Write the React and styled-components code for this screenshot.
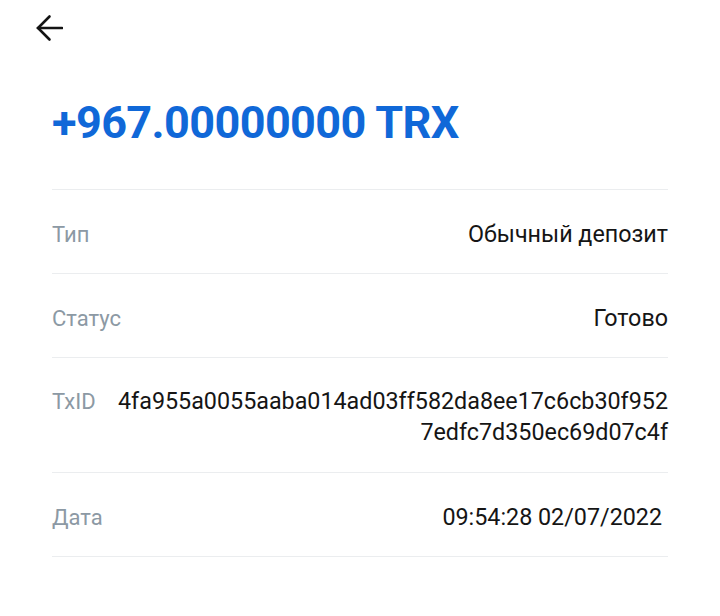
import React from "react";
import styled, { createGlobalStyle } from "styled-components";

const GlobalStyle = createGlobalStyle`
  html, body {
    margin: 0;
    padding: 0;
    background: #ffffff;
  }
  body {
    font-family: Roboto, "Noto Sans", sans-serif;
  }
`;

const Page = styled.div`
  width: 720px;
  height: 616px;
  box-sizing: border-box;
  padding: 0 52px;
  background: #ffffff;
  overflow: hidden;
`;

const TopBar = styled.div`
  height: 56px;
  display: flex;
  align-items: center;
  margin-left: -17px;
`;

const BackButton = styled.button`
  border: 0;
  background: none;
  padding: 0;
  display: flex;
  cursor: pointer;
  color: #141414;
`;

const Amount = styled.div`
  margin-top: 39px;
  height: 94px;
  font-size: 45px;
  font-weight: 700;
  color: #1068d8;
  letter-spacing: -0.6px;
  line-height: 56px;
`;

const List = styled.div`
  border-bottom: 1px solid #ebedef;
`;

const Row = styled.div`
  display: flex;
  justify-content: space-between;
  align-items: ${p => (p.top ? "flex-start" : "center")};
  gap: 20px;
  border-top: 1px solid #ebedef;
  min-height: 84px;
  padding: ${p => (p.top ? "28px 0 24px" : "5px 0 0")};
  box-sizing: border-box;
`;

const Label = styled.div`
  font-size: 22px;
  color: #8c99a4;
  white-space: nowrap;
  line-height: 31px;
`;

const Value = styled.div`
  font-size: 23.3px;
  color: #151515;
  text-align: right;
  line-height: 31px;
  padding-right: ${p => p.inset || 0}px;
`;

const Arrow = () => (
  <svg width="28" height="28" viewBox="0 0 28 28" fill="none" stroke="currentColor" strokeWidth="2.6" strokeLinecap="round" strokeLinejoin="miter">
    <path d="M27 14H3" />
    <path d="M14.5 2.5L3 14l11.5 11.5" />
  </svg>
);

export default function App() {
  return (
    <>
      <GlobalStyle />
      <Page>
        <TopBar>
          <BackButton aria-label="Назад">
            <Arrow />
          </BackButton>
        </TopBar>
        <Amount>+967.00000000 TRX</Amount>
        <List>
          <Row>
            <Label>Тип</Label>
            <Value>Обычный депозит</Value>
          </Row>
          <Row>
            <Label>Статус</Label>
            <Value>Готово</Value>
          </Row>
          <Row top>
            <Label>TxID</Label>
            <Value>
              4fa955a0055aaba014ad03ff582da8ee17c6cb30f952
              <br />
              7edfc7d350ec69d07c4f
            </Value>
          </Row>
          <Row>
            <Label>Дата</Label>
            <Value inset={6}>09:54:28 02/07/2022</Value>
          </Row>
        </List>
      </Page>
    </>
  );
}
